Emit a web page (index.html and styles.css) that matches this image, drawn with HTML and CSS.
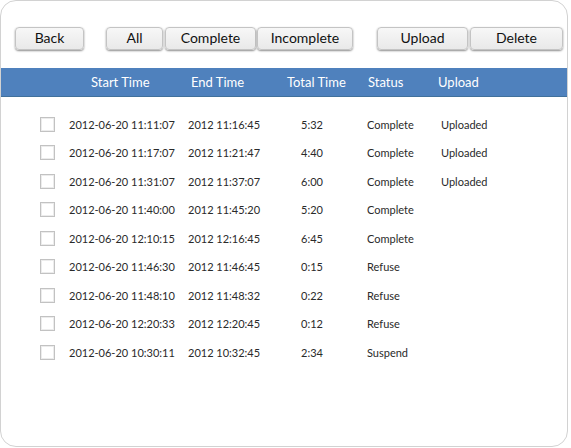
FILE: index.html
```html
<!DOCTYPE html>
<html>
<head>
<meta charset="utf-8">
<link rel="stylesheet" href="styles.css">
</head>
<body>
<div class="frame">
  <div class="toolbar">
    <button class="btn w-back">Back</button>
    <div class="group g-filter">
      <button class="btn w-all">All</button>
      <button class="btn w-complete">Complete</button>
      <button class="btn w-incomplete">Incomplete</button>
    </div>
    <div class="group g-action">
      <button class="btn w-upload">Upload</button>
      <button class="btn w-delete">Delete</button>
    </div>
  </div>
  <div class="header">
    <span>Start Time</span>
    <span>End Time</span>
    <span>Total Time</span>
    <span>Status</span>
    <span>Upload</span>
  </div>
  <div class="rows">
    <div class="row"><span class="cb"></span><span>2012-06-20 11:11:07</span><span>2012 11:16:45</span><span>5:32</span><span>Complete</span><span>Uploaded</span></div>
    <div class="row"><span class="cb"></span><span>2012-06-20 11:17:07</span><span>2012 11:21:47</span><span>4:40</span><span>Complete</span><span>Uploaded</span></div>
    <div class="row"><span class="cb"></span><span>2012-06-20 11:31:07</span><span>2012 11:37:07</span><span>6:00</span><span>Complete</span><span>Uploaded</span></div>
    <div class="row"><span class="cb"></span><span>2012-06-20 11:40:00</span><span>2012 11:45:20</span><span>5:20</span><span>Complete</span><span></span></div>
    <div class="row"><span class="cb"></span><span>2012-06-20 12:10:15</span><span>2012 12:16:45</span><span>6:45</span><span>Complete</span><span></span></div>
    <div class="row"><span class="cb"></span><span>2012-06-20 11:46:30</span><span>2012 11:46:45</span><span>0:15</span><span>Refuse</span><span></span></div>
    <div class="row"><span class="cb"></span><span>2012-06-20 11:48:10</span><span>2012 11:48:32</span><span>0:22</span><span>Refuse</span><span></span></div>
    <div class="row"><span class="cb"></span><span>2012-06-20 12:20:33</span><span>2012 12:20:45</span><span>0:12</span><span>Refuse</span><span></span></div>
    <div class="row"><span class="cb"></span><span>2012-06-20 10:30:11</span><span>2012 10:32:45</span><span>2:34</span><span>Suspend</span><span></span></div>
  </div>
</div>
</body>
</html>
```
FILE: styles.css
```css
html, body {
  margin: 0;
  padding: 0;
  background: #ffffff;
}
body {
  font-family: Lato, "Liberation Sans", sans-serif;
  color: #222;
}
.frame {
  box-sizing: border-box;
  width: 568px;
  height: 447px;
  border: 1px solid #d2d2d2;
  border-radius: 16px;
  overflow: hidden;
  background: #fff;
}
.toolbar {
  display: flex;
  align-items: center;
  padding: 25px 0 0 14px;
  height: 24px;
}
.group {
  display: flex;
  gap: 2px;
}
.g-filter { margin-left: 22px; }
.g-action { margin-left: 24px; }
.g-filter .w-incomplete { margin-left: -1px; }
.btn {
  box-sizing: border-box;
  height: 23px;
  padding: 0 0 2px;
  font-family: Lato, "Liberation Sans", sans-serif;
  font-size: 14px;
  color: #111;
  background: linear-gradient(#f7f7f7, #e9e9e9);
  border: 1px solid #c4c4c4;
  border-radius: 4px;
  box-shadow: 0 1px 2px rgba(0,0,0,0.45);
}
.w-back { width: 69px; }
.w-all { width: 57px; }
.w-complete { width: 91px; }
.w-incomplete { width: 96px; }
.w-upload { width: 91px; }
.w-delete { width: 93px; }
.header {
  margin-top: 18px;
  height: 28px;
  background: #4f81bd;
  border-bottom: 1px solid #41719c;
  display: grid;
  grid-template-columns: 100px 96px 81px 70px 1fr;
  align-items: center;
  padding-left: 90px;
  color: #fff;
  font-size: 13px;
}
.rows {
  padding-top: 13px;
}
.row {
  height: 28.5px;
  display: grid;
  grid-template-columns: 29px 119px 113px 66px 74px 1fr;
  align-items: center;
  padding-left: 39px;
  font-size: 11px;
  color: #2a2a2a;
}
.cb {
  box-sizing: border-box;
  width: 15px;
  height: 15px;
  border: 1px solid #c2c2c2;
  box-shadow: inset 0 0 0 1px #ececec;
  background: #fff;
}
```
